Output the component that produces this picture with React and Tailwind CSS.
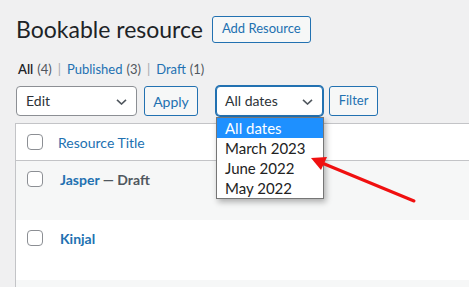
import React from "react";

const font = { fontFamily: "Lato, 'Noto Sans', sans-serif" };

function Chevron() {
    return (
        <svg className="absolute right-[9px] top-[12px] h-[6px] w-[11px]" viewBox="0 0 11 6" fill="none">
            <path d="M1 0.8 L5.5 5 L10 0.8" stroke="#50575e" strokeWidth="1.6" />
        </svg>
    );
}

function Checkbox() {
    return <span className="block h-4 w-4 rounded-[4px] border border-[#8c8f94] bg-white" />;
}

const dates = ["All dates", "March 2023", "June 2022", "May 2022"];

export default function App() {
    return (
        <div className="relative h-[287px] overflow-hidden bg-[#f0f0f1] pl-4 pt-[14px] text-[#3c434a]" style={font}>
            {/* heading */}
            <div className="flex items-center">
                <h1 className="text-[23px] leading-[30px] font-normal text-[#1d2327]">Bookable resource</h1>
                <button className="ml-[9px] h-[27px] rounded-[3px] border border-[#2271b1] bg-[#f6f7f7] px-[9px] text-[13px] text-[#2271b1]">
                    Add Resource
                </button>
            </div>

            {/* status links */}
            <div className="mt-[16px] ml-[2px] flex items-center text-[13px] leading-[18px]">
                <span className="font-semibold text-[#1d2327]">All</span>
                <span className="ml-1 text-[#50575e]">(4)</span>
                <span className="mx-[6px] text-[#a7aaad]">|</span>
                <span className="text-[#2271b1]">Published</span>
                <span className="ml-1 text-[#50575e]">(3)</span>
                <span className="mx-[6px] text-[#a7aaad]">|</span>
                <span className="text-[#2271b1]">Draft</span>
                <span className="ml-1 text-[#50575e]">(1)</span>
            </div>

            {/* bulk actions + filters */}
            <div className="mt-[8px] flex items-center">
                <div className="relative h-[30px] w-[121px] rounded-[4px] border border-[#8c8f94] bg-white">
                    <span className="block pl-[9px] text-[14px] leading-[28px] text-[#2c3338]">Edit</span>
                    <Chevron />
                </div>
                <button className="ml-[7px] h-[30px] w-[54px] rounded-[3px] border border-[#2271b1] bg-[#f6f7f7] text-[14px] text-[#2271b1]">
                    Apply
                </button>
                <div className="relative ml-[18px] h-[30px] w-[107px] rounded-[4px] border border-[#2271b1] bg-white shadow-[0_0_0_1px_#2271b1]">
                    <span className="block pl-[8px] text-[14px] leading-[28px] text-[#2c3338]">All dates</span>
                    <Chevron />
                    {/* open native list */}
                    <ul className="absolute left-[-1px] top-[30px] z-10 w-[108px] border border-[#767676] bg-white shadow-[2px_3px_6px_rgba(0,0,0,0.3)]">
                        {dates.map((d, i) => (
                            <li
                                key={d}
                                className={
                                    i === 0
                                        ? "h-5 bg-[#1e90ff] pl-2 text-[15px] leading-5 text-white"
                                        : "h-5 pl-2 text-[15px] leading-5 text-[#222]"
                                }
                            >
                                {d}
                            </li>
                        ))}
                    </ul>
                </div>
                <button className="ml-[6px] h-[30px] w-[49px] rounded-[3px] border border-[#2271b1] bg-[#f6f7f7] text-[13px] text-[#2271b1]">
                    Filter
                </button>
            </div>

            {/* list table */}
            <div className="mt-[7px] -ml-px w-[480px] border-l border-t border-[#c3c4c7] bg-white">
                <div className="flex h-[37px] items-center border-b border-[#c3c4c7] bg-white">
                    <div className="pl-[11px]"><Checkbox /></div>
                    <span className="ml-[15px] text-[14px] text-[#2271b1]">Resource Title</span>
                </div>
                <div className="flex h-[59px] items-start bg-[#f6f7f7] pt-[10px]">
                    <div className="pl-[11px]"><Checkbox /></div>
                    <span className="ml-[17px] text-[14px] leading-[18px] font-bold">
                        <span className="text-[#2271b1]">Jasper</span>
                        <span className="text-[#50575e]"> — Draft</span>
                    </span>
                </div>
                <div className="flex h-[60px] items-start bg-white pt-[10px]">
                    <div className="pl-[11px]"><Checkbox /></div>
                    <span className="ml-[17px] text-[14px] leading-[18px] font-bold text-[#2271b1]">Kinjal</span>
                </div>
                <div className="h-[40px] bg-[#f6f7f7]" />
            </div>

            {/* annotation arrow */}
            <svg className="pointer-events-none absolute left-0 top-0 z-20" width="469" height="287" viewBox="0 0 469 287">
                <line x1="414" y1="201" x2="322" y2="163" stroke="#f01010" strokeWidth="3" strokeLinecap="round" />
                <polygon points="311,158 327,157 321,170" fill="#f01010" />
            </svg>
        </div>
    );
}
